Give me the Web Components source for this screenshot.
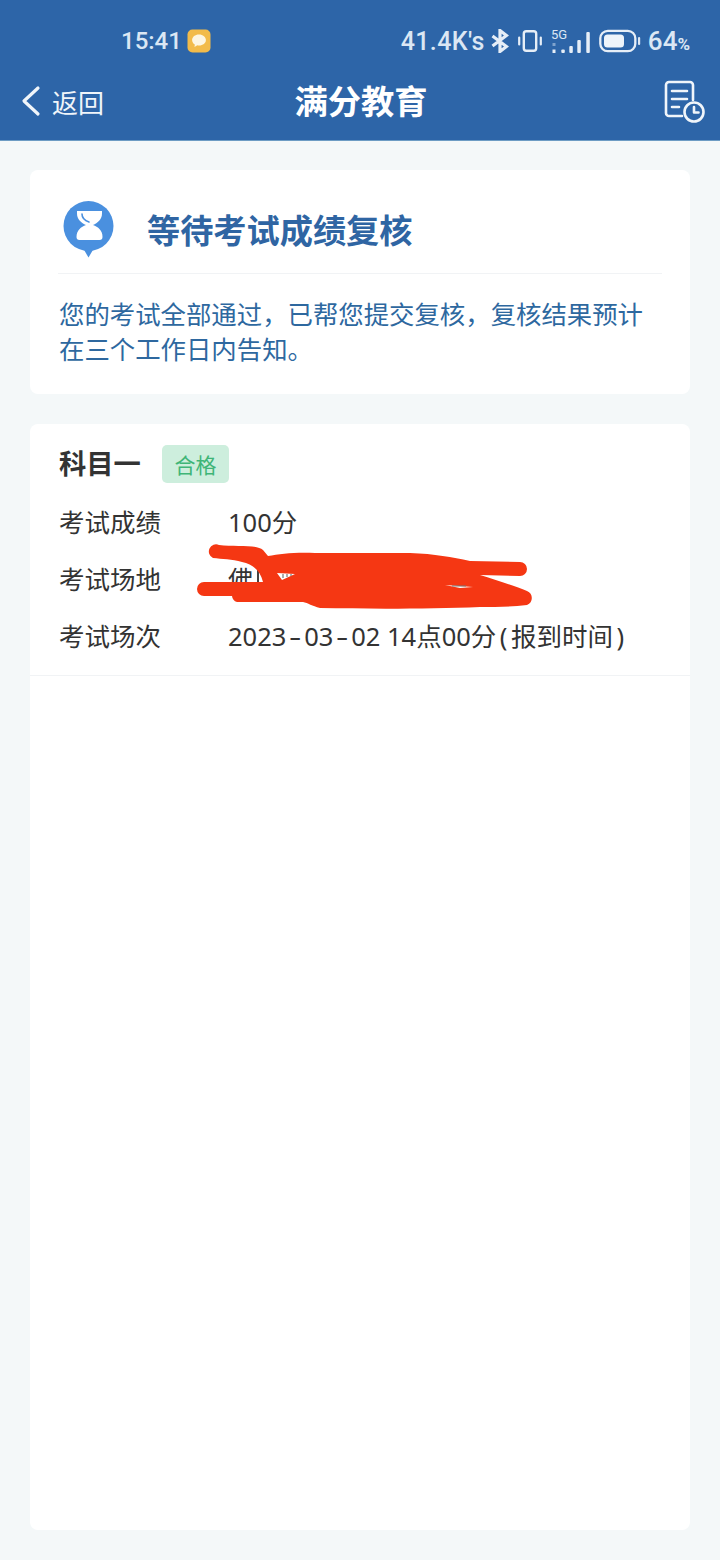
<!DOCTYPE html>
<html lang="zh">
<head>
<meta charset="utf-8">
<title>满分教育</title>
<style>
  html, body { margin: 0; padding: 0; background: #f4f8f9; }
  body { font-family: "Noto Sans CJK SC", "Noto Sans", sans-serif; }
  .dash { display: inline-block; transform: scaleX(1.5); margin: 0 4.8px; }
  .paren { display: inline-block; margin: 0 3.5px; }
</style>
</head>
<body>
<exam-app>
  <app-header slot="header" title="满分教育"></app-header>
  <review-card heading="等待考试成绩复核">您的考试全部通过，已帮您提交复核，复核结果预计在三个工作日内告知。</review-card>
  <subject-card name="科目一" status="合格">
    <info-row label="考试成绩">100分</info-row>
    <info-row label="考试场地" scribbled>佛</info-row>
    <info-row label="考试场次">2023<span class="dash">-</span>03<span class="dash">-</span>02 14点00分<span class="paren">(</span>报到时间<span class="paren">)</span></info-row>
  </subject-card>
</exam-app>

<script>
class ExamApp extends HTMLElement {
    constructor() {
        super();
        this.attachShadow({ mode: 'open' });
        this.shadowRoot.innerHTML = `
            <style>
                :host { display: flex; flex-direction: column; width: 720px; height: 1560px; background: #f4f8f9; overflow: hidden; }
                main { flex: 1; display: flex; flex-direction: column; gap: 30px; padding: 29px 30px 30px; min-height: 0; }
            </style>
            <slot name="header"></slot>
            <main><slot></slot></main>
        `;
    }
}

class AppHeader extends HTMLElement {
    constructor() {
        super();
        this.attachShadow({ mode: 'open' });
    }

    connectedCallback() {
        this.shadowRoot.innerHTML = `
            <style>
                :host { display: block; height: 141px; background: #2d65a8; color: #fff; box-sizing: border-box; border-bottom: 1px solid #6d9cc4; }
                .status { height: 64px; display: flex; align-items: center; padding: 18px 0 0 121px; box-sizing: border-box; color: #dbe7f4; font-family: Roboto, sans-serif; font-weight: 500; font-size: 25px; }
                .time { font-size: 24px; }
                .msg { margin-left: 5px; display: block; }
                .right { margin-left: auto; display: flex; align-items: center; padding-right: 30px; }
                .speed { letter-spacing: 0.4px; }
                .right svg { display: block; }
                .pct { font-size: 26px; }
                .pct small { font-size: 17px; font-weight: 700; }
                .nav { height: 75px; display: grid; grid-template-columns: 1fr auto 1fr; align-items: center; padding: 0 18px 0 20px; }
                .back { display: flex; align-items: center; gap: 10px; font-size: 26px; color: #f0f5fa; }
                .back svg { margin-top: -2px; }
                h1 { margin: 0; font-size: 33.300px; font-weight: 700; line-height: 1; padding-bottom: 4px; }
                .hist { justify-self: end; display: block; margin-right: -4px; }
            </style>
            <div class="status">
                <span class="time">15:41</span>
                <svg class="msg" width="24" height="24" viewBox="0 0 24 24">
                    <rect x="0.5" y="0.5" width="23" height="23" rx="5" fill="#f2bb4a"/>
                    <path d="M12 5.400c-4 0-6.900 2.400-6.900 5.600 0 1.900 1 3.500 2.700 4.500l-.3 2.400 2.800-1.600c.5.100 1.100.2 1.700.2 4 0 6.900-2.400 6.900-5.500S16 5.400 12 5.400z" fill="#fdf6e2"/>
                </svg>
                <div class="right">
                    <span class="speed">41.4K's</span>
                    <svg style="margin-left:6px" width="18" height="24" viewBox="0 0 18 24" fill="none" stroke="#e6eef7" stroke-width="3.200" stroke-linejoin="miter">
                        <path d="M1.500 7l14 10.500-6.500 5V1.500l6.500 5L1.500 17"/>
                    </svg>
                    <svg style="margin-left:9px" width="24" height="22" viewBox="0 0 24 22" fill="none" stroke="#e6eef7" stroke-linecap="round">
                        <rect x="5.800" y="1.200" width="12.400" height="19.600" rx="2.500" stroke-width="2.400"/>
                        <path d="M1.200 7.500v7M22.800 7.500v7" stroke-width="2.200"/>
                    </svg>
                    <svg style="margin-left:8px" width="41" height="27" viewBox="0 0 41 27">
                        <text x="1" y="10.500" font-family="Roboto, sans-serif" font-size="13" font-weight="400" fill="#dbe7f4">5G</text>
                        <g fill="#e6eef7">
                            <rect x="2.500" y="15" width="3" height="3" fill="#7fa3cd"/>
                            <rect x="2.500" y="21.500" width="3" height="3.500"/>
                            <rect x="11.300" y="21.500" width="3.500" height="3.500" rx="1"/>
                            <rect x="19.300" y="18" width="3.500" height="7" rx="1"/>
                            <rect x="27.300" y="12" width="3.500" height="13" rx="1"/>
                            <rect x="36.300" y="4" width="3.500" height="21" rx="1"/>
                        </g>
                    </svg>
                    <svg style="margin-left:8px" width="42" height="24" viewBox="0 0 42 24" fill="none">
                        <rect x="1.300" y="1.800" width="35" height="20.400" rx="7.500" stroke="#e6eef7" stroke-width="2.300"/>
                        <rect x="5" y="5.500" width="20" height="13" rx="3.500" fill="#eef4fa"/>
                        <rect x="39" y="8" width="2.200" height="8" rx="1" fill="#dbe7f4"/>
                    </svg>
                    <span class="pct" style="margin-left:7px">64<small>%</small></span>
                </div>
            </div>
            <div class="nav">
                <div class="back">
                    <svg width="22" height="32" viewBox="0 0 22 32" fill="none" stroke="#f0f5fa" stroke-width="3.200" stroke-linecap="round" stroke-linejoin="round"><path d="M18 3L4 16l14 13"/></svg>
                    <span>返回</span>
                </div>
                <h1>${this.getAttribute('title')}</h1>
                <svg class="hist" width="42" height="44" viewBox="0 0 42 44" fill="none" stroke="#f0f5fa" stroke-width="2.600" stroke-linecap="round" stroke-linejoin="round">
                    <path d="M18 36H5a3 3 0 0 1-3-3V5a3 3 0 0 1 3-3h21a3 3 0 0 1 3 3v15"/>
                    <path d="M8 11h15M8 19h15M8 27h7"/>
                    <circle cx="30" cy="32" r="9.500"/>
                    <path d="M30 27v5.500h4.500"/>
                </svg>
            </div>
        `;
    }
}

class ReviewCard extends HTMLElement {
    constructor() {
        super();
        this.attachShadow({ mode: 'open' });
    }

    connectedCallback() {
        this.shadowRoot.innerHTML = `
            <style>
                :host { display: block; height: 224px; background: #fff; border-radius: 8px; box-sizing: border-box; padding: 0 28px; color: #2e689f; flex: none; }
                .head { height: 104px; display: flex; align-items: center; gap: 32px; padding: 15px 0 0 5px; border-bottom: 1px solid #f1f3f5; box-sizing: border-box; }
                h2 { margin: 0; font-size: 33.200px; font-weight: 700; line-height: 1; color: #2f65a3; }
                p { margin: 22px 0 0 1px; font-size: 25.400px; line-height: 35px; }
            </style>
            <div class="head">
                <svg width="52" height="60" viewBox="0 0 52 60">
                    <circle cx="25.500" cy="27" r="25" fill="#4a90df"/>
                    <path d="M20.500 50l5 8.500 5-8.500z" fill="#4a90df"/>
                    <path d="M14 12h25v2.500c0 6-4.500 9.500-9 11.500 5 2 9.500 5 9.500 12 0 2-1 3-3 3H16.500c-2 0-3-1-3-3 0-7 4.500-10 9.500-12-4.500-2-9-5.500-9-11.500z" fill="#fff"/>
                    <path d="M19 15c0 3.500 2.500 6.500 7 8" fill="none" stroke="#4a90df" stroke-width="1.600" stroke-linecap="round"/>
                </svg>
                <h2>${this.getAttribute('heading')}</h2>
            </div>
            <p><slot></slot></p>
        `;
    }
}

class SubjectCard extends HTMLElement {
    constructor() {
        super();
        this.attachShadow({ mode: 'open' });
    }

    connectedCallback() {
        this.shadowRoot.innerHTML = `
            <style>
                :host { display: block; flex: 1; background: #fff; border-radius: 8px; min-height: 0; }
                .block { height: 252px; box-sizing: border-box; padding: 21px 30px 0; border-bottom: 1px solid #f1f3f5; }
                .title { display: flex; align-items: center; gap: 21px; height: 38px; margin-bottom: 9px; }
                h3 { margin: -2px 0 0 -1px; font-size: 27.300px; font-weight: 700; color: #333; line-height: 1; }
                .tag { width: 67px; height: 38px; display: flex; align-items: center; justify-content: center; background: #cdeedd; color: #3fb577; border-radius: 5px; font-size: 21px; line-height: 1; }
            </style>
            <div class="block">
                <div class="title">
                    <h3>${this.getAttribute('name')}</h3>
                    <span class="tag">${this.getAttribute('status')}</span>
                </div>
                <slot></slot>
            </div>
        `;
    }
}

class InfoRow extends HTMLElement {
    constructor() {
        super();
        this.attachShadow({ mode: 'open' });
    }

    connectedCallback() {
        const scribble = this.hasAttribute('scribbled') ? `
            <svg class="scribble" width="345" height="75" viewBox="0 0 345 75">
                <path d="M68 28v14" stroke="#444" stroke-width="2" fill="none"/>
                <path fill="#f53713" fill-rule="evenodd" d="M29 5C45 7 66 4 73 10L78 16C90 14 105 12 125 13L220 13C245 14 262 17 280 21L330 22A7 7 0 0 1 330 36L290 35C306 40 325 46 337 51A7.500 7.500 0 0 1 337 65C320 67 305 67 290 67C240 69 180 69 130 68C122 66 118 63 113 62L47 62A7 7 0 0 1 42 56L14 56A7 7 0 0 1 14 42L73 42C70 30 62 24 52 22C42 19 32 19 23 18A6.500 6.500 0 0 1 29 5Z
                M87 33L105 34L92 40Z M255 45L283 47L270 48Z"/>
                <path d="M93 34v4M97 34v3M101 34v2M262 46h14" stroke="#777" stroke-width="1.200" fill="none"/>
            </svg>` : '';
        this.shadowRoot.innerHTML = `
            <style>
                :host { display: flex; height: 57px; align-items: center; font-size: 25.500px; color: #333; position: relative; }
                .label { width: 168px; flex: none; margin-left: -1px; padding-right: 1px; }
                .value { font-family: "Noto Sans", "Noto Sans CJK SC", sans-serif; white-space: nowrap; }
                .scribble { position: absolute; left: 130px; top: -9px; }
            </style>
            <span class="label">${this.getAttribute('label')}</span>
            <span class="value"><slot></slot></span>
            ${scribble}
        `;
    }
}

window.customElements.define('exam-app', ExamApp);
window.customElements.define('app-header', AppHeader);
window.customElements.define('review-card', ReviewCard);
window.customElements.define('subject-card', SubjectCard);
window.customElements.define('info-row', InfoRow);
</script>
</body>
</html>
